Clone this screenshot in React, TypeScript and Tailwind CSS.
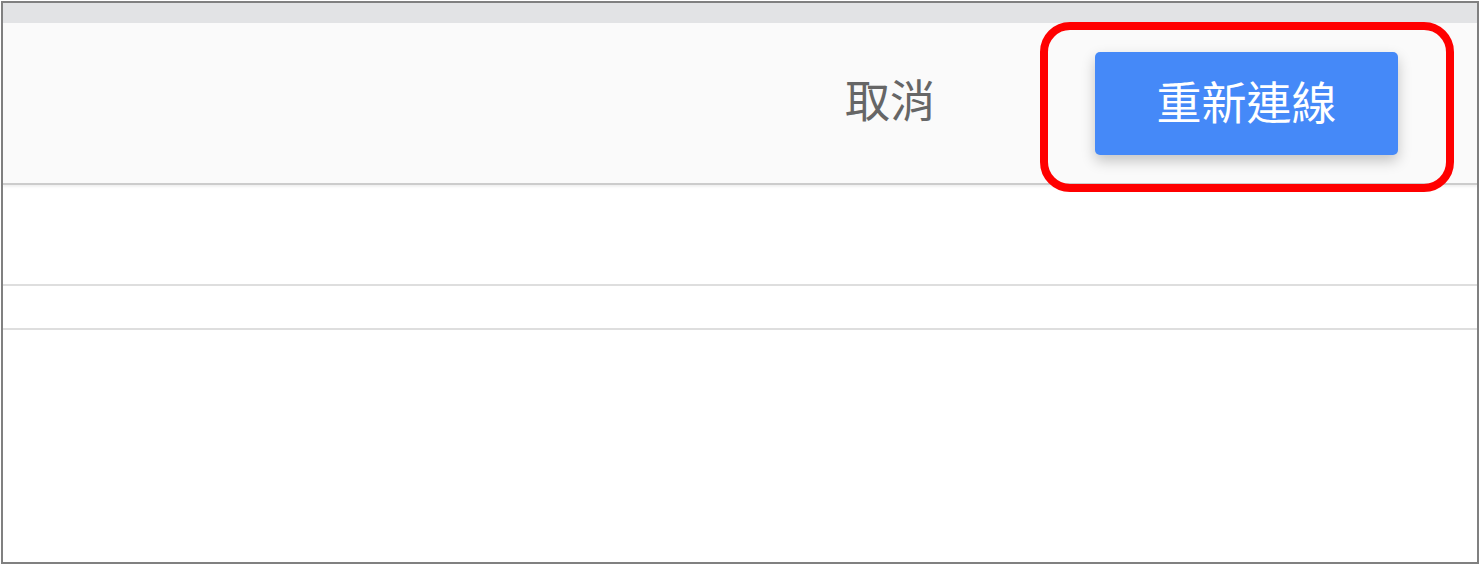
import React from "react";

const font = { fontFamily: '"Noto Sans CJK TC", "Noto Sans", sans-serif' };

export default function App() {
    return (
        <div className="w-[1480px] h-[565px] bg-white p-px" style={font}>
            <div className="relative h-full border-2 border-[#808080] flex flex-col bg-white">
                <div className="h-[20px] bg-[#e2e3e5] shrink-0" />
                <div className="h-[162px] shrink-0 bg-[#fafafa] border-b-2 border-[#cccccc] shadow-[0_2px_2px_rgba(0,0,0,0.06)] flex items-center justify-end pr-[79px]">
                    <span className="text-[45px] leading-none text-[#666666] mr-[160px] mt-[-10px]">取消</span>
                    <button className="w-[303px] h-[103px] rounded-[5px] bg-[#4589f8] text-white text-[45px] leading-none pb-[5px] shadow-[0_6px_14px_rgba(0,0,0,0.22)]">
                        重新連線
                    </button>
                </div>
                <div className="h-[101px] shrink-0 border-b-2 border-[#dedede]" />
                <div className="h-[44px] shrink-0 border-b-2 border-[#dedede]" />
                <div className="flex-1" />
                <div className="absolute left-[1037px] top-[19px] w-[414px] h-[170px] rounded-[30px] border-[8px] border-[#ff0000]" />
            </div>
        </div>
    );
}
